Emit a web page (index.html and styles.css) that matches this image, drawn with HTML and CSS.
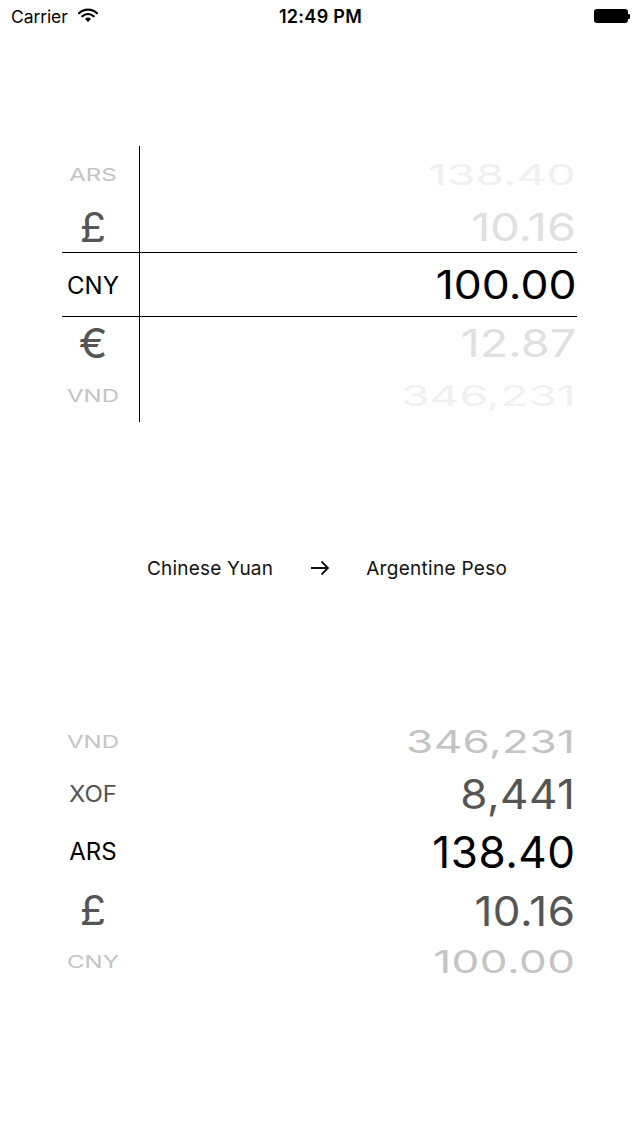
FILE: index.html
```html
<!DOCTYPE html>
<html>
	<head>
		<title>Currency Converter</title>
		<meta charset="utf-8" />
		<link rel="stylesheet" href="styles.css">
	</head>
	<body>
		<div class="status-bar">
			<div class="carrier">
				Carrier
				<svg class="wifi" width="20" height="14" viewBox="0 0 20 14">
					<path d="M1 5.2a13 13 0 0 1 18 0" fill="none" stroke="#000" stroke-width="2.2" stroke-linecap="round" />
					<path d="M4.3 8.3a8.2 8.2 0 0 1 11.4 0" fill="none" stroke="#000" stroke-width="2.2" stroke-linecap="round" />
					<path d="M10 14l-3-3.1a4.3 4.3 0 0 1 6 0z" fill="#000" />
				</svg>
			</div>
			<div class="clock">12:49 PM</div>
			<div class="battery">
				<div class="battery-body"></div>
				<div class="battery-nub"></div>
			</div>
		</div>

		<!-- Source picker -->
		<div class="picker picker-source">
			<div class="row far r1">
				<div class="code"><span>ARS</span></div>
				<div class="amount"><span>138.40</span></div>
			</div>
			<div class="row near r2">
				<div class="code symbol"><span>£</span></div>
				<div class="amount"><span>10.16</span></div>
			</div>
			<div class="row selected r3">
				<div class="code"><span>CNY</span></div>
				<div class="amount"><span>100.00</span></div>
			</div>
			<div class="row near r4">
				<div class="code symbol"><span>€</span></div>
				<div class="amount"><span>12.87</span></div>
			</div>
			<div class="row far r5">
				<div class="code"><span>VND</span></div>
				<div class="amount"><span>346,231</span></div>
			</div>
		</div>

		<div class="pair">
			<span class="pair-from">Chinese Yuan</span>
			<svg class="arrow" width="20" height="16" viewBox="0 0 20 16">
				<path d="M1 8h17M11.5 1.5L18 8l-6.5 6.5" fill="none" stroke="#111" stroke-width="1.8" />
			</svg>
			<span class="pair-to">Argentine Peso</span>
		</div>

		<!-- Target picker -->
		<div class="picker picker-target">
			<div class="row far r1">
				<div class="code"><span>VND</span></div>
				<div class="amount"><span>346,231</span></div>
			</div>
			<div class="row near r2">
				<div class="code"><span>XOF</span></div>
				<div class="amount"><span>8,441</span></div>
			</div>
			<div class="row selected r3">
				<div class="code"><span>ARS</span></div>
				<div class="amount"><span>138.40</span></div>
			</div>
			<div class="row near r4">
				<div class="code symbol"><span>£</span></div>
				<div class="amount"><span>10.16</span></div>
			</div>
			<div class="row far r5">
				<div class="code"><span>CNY</span></div>
				<div class="amount"><span>100.00</span></div>
			</div>
		</div>
	</body>
</html>
```

FILE: styles.css
```css
* {
	padding: 0;
	margin: 0;
	box-sizing: border-box;
}

body {
	font-family: Inter, "Noto Sans", sans-serif;
	background: #fff;
	color: #000;
	width: 639px;
}

/* Status bar */
.status-bar {
	height: 32px;
	padding: 0 9px 0 11px;
	display: grid;
	grid-template-columns: 1fr auto 1fr;
	align-items: center;
	font-size: 17.5px;
}

.carrier {
	display: flex;
	align-items: center;
	gap: 10px;
	letter-spacing: -0.1px;
}

.wifi {
	margin-top: -2px;
}

.clock {
	font-size: 18px;
	font-weight: 600;
	letter-spacing: 0.3px;
}

.battery {
	justify-self: end;
	display: flex;
	align-items: center;
}

.battery-body {
	width: 34px;
	height: 14px;
	background: #000;
	border-radius: 3px;
}

.battery-nub {
	width: 2px;
	height: 5px;
	background: #000;
	border-radius: 0 1px 1px 0;
}

/* Pickers */
.picker {
	width: 515px;
	margin-left: 62px;
	display: flex;
	flex-direction: column;
}

.picker-source {
	margin-top: 114px;
}

.picker-target {
	margin-top: 135px;
}

.row {
	display: flex;
	line-height: 1;
}

.code {
	width: 62px;
	display: flex;
	justify-content: center;
	align-items: center;
	font-size: 24px;
}

.code.symbol {
	font-size: 43px;
	font-weight: 400;
}

.amount {
	flex: 1;
	margin-left: 15px;
	padding-right: 2px;
	display: flex;
	justify-content: flex-end;
	align-items: center;
	font-size: 44px;
	font-weight: 400;
}

.row span {
	display: inline-block;
}

.amount span {
	transform-origin: right center;
	letter-spacing: 0.5px;
	margin-right: -0.5px;
}

.far span {
	transform: scaleY(0.7);
}

.near span {
	transform: scaleY(0.94);
}

.picker-source .amount {
	border-left: 1px solid #000;
	font-size: 41px;
	padding-right: 1px;
}

.picker-source .amount span {
	letter-spacing: 0;
	margin-right: 0;
}

.picker-source .far .amount span {
	transform: scale(1.13, 0.7);
}

.picker-source .near .amount span {
	transform: scale(1.14, 0.94);
}

.picker-source .selected .amount {
	font-size: 39px;
	padding-right: 0;
}

.picker-source .selected .amount span {
	transform: scaleX(1.14);
}

.picker-source .r1 { height: 57px; }
.picker-source .r2 { height: 49px; }
.picker-source .r3 { height: 65px; }
.picker-source .r4 { height: 52px; }
.picker-source .r5 { height: 53px; }

.picker-source .selected {
	border-top: 1px solid #000;
	border-bottom: 1px solid #000;
}

.picker-source .selected .code span {
	margin-top: 2px;
}

.picker-source .far .code { color: #c4c4c4; }
.picker-source .near .code { color: #555; }
.picker-source .far .amount { color: #f0f0f0; }
.picker-source .near .amount { color: #e0e0e0; }

.picker-target .r1 { height: 53px; }
.picker-target .r2 { height: 51px; }
.picker-target .r3 { height: 66px; }
.picker-target .r4 { height: 51px; }
.picker-target .r5 { height: 52px; }

.picker-target .far { color: #c4c4c4; }
.picker-target .near { color: #555; }

/* Conversion pair */
.pair {
	margin-top: 134px;
	height: 24px;
	display: flex;
	align-items: center;
	padding-left: 147px;
	font-size: 19px;
	color: #111;
}

.pair-from {
	letter-spacing: 0.2px;
}

.pair-to {
	letter-spacing: 0.3px;
}

.arrow {
	margin: 0 36px 0 37px;
}
```
